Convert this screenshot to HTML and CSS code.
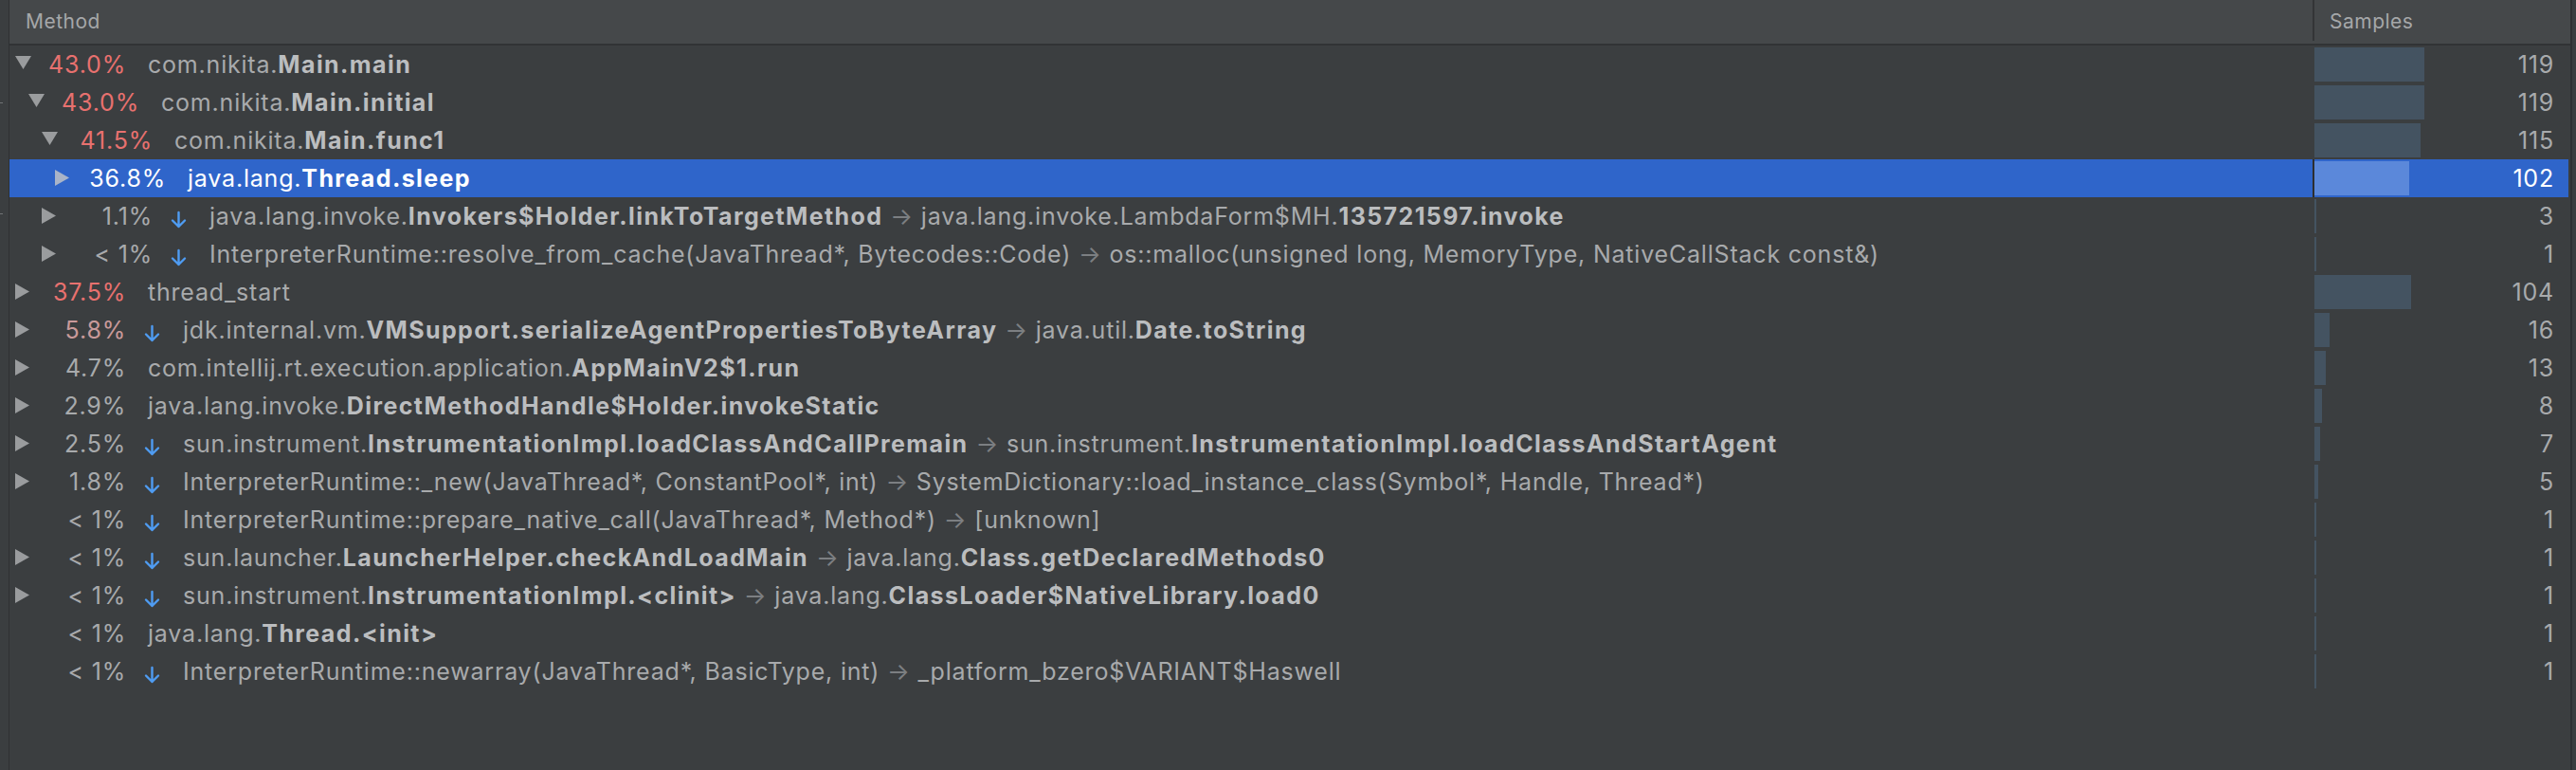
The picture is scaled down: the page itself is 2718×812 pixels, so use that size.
FILE: index.html
```html
<!DOCTYPE html>
<html>
<head>
<meta charset="utf-8">
<link rel="stylesheet" href="styles.css">
</head>
<body>
<div class="panel">
  <div class="gutter"><div class="tick tick1"></div><div class="tick tick2"></div></div>
  <div class="table">
    <div class="thead">
      <div class="th th-method">Method</div>
      <div class="th-sep"></div>
      <div class="th th-samples">Samples</div>
    </div>
    <div class="tbody">

      <div class="row">
        <div class="cm lv0"><span class="tog"><svg width="17" height="40"><polygon class="tri" points="0,11 17,11 8.5,25"/></svg></span><span class="pct hot">43.0%</span><span class="txt">com.nikita.<b>Main.main</b></span></div>
        <div class="cs-sep"></div>
        <div class="cs"><span class="bar" style="width:116px"></span><span class="num">119</span></div>
      </div>

      <div class="row">
        <div class="cm lv1"><span class="tog"><svg width="17" height="40"><polygon class="tri" points="0,11 17,11 8.5,25"/></svg></span><span class="pct hot">43.0%</span><span class="txt">com.nikita.<b>Main.initial</b></span></div>
        <div class="cs-sep"></div>
        <div class="cs"><span class="bar" style="width:116px"></span><span class="num">119</span></div>
      </div>

      <div class="row">
        <div class="cm lv2"><span class="tog"><svg width="17" height="40"><polygon class="tri" points="0,11 17,11 8.5,25"/></svg></span><span class="pct hot">41.5%</span><span class="txt">com.nikita.<b>Main.func1</b></span></div>
        <div class="cs-sep"></div>
        <div class="cs"><span class="bar" style="width:112px"></span><span class="num">115</span></div>
      </div>

      <div class="row sel">
        <div class="cm lv3"><span class="tog"><svg width="17" height="40"><polygon class="tri" points="0,11 15,19.5 0,28"/></svg></span><span class="pct">36.8%</span><span class="txt">java.lang.<b>Thread.sleep</b></span></div>
        <div class="cs-sep"></div>
        <div class="cs"><span class="bar" style="width:100px"></span><span class="num">102</span></div>
      </div>

      <div class="row">
        <div class="cm lv2"><span class="tog"><svg width="17" height="40"><polygon class="tri" points="0,11 15,19.5 0,28"/></svg></span><span class="pct">1.1%</span><span class="dn"><svg width="17" height="40"><path d="M8.5 16 V31 M2 24.5 L8.5 31 L15 24.5"/></svg></span><span class="txt">java.lang.invoke.<b>Invokers$Holder.linkToTargetMethod</b> <i class="to">→</i> java.lang.invoke.LambdaForm$MH.<b>135721597.invoke</b></span></div>
        <div class="cs-sep"></div>
        <div class="cs"><span class="bar" style="width:2px"></span><span class="num">3</span></div>
      </div>

      <div class="row">
        <div class="cm lv2"><span class="tog"><svg width="17" height="40"><polygon class="tri" points="0,11 15,19.5 0,28"/></svg></span><span class="pct">&lt; 1%</span><span class="dn"><svg width="17" height="40"><path d="M8.5 16 V31 M2 24.5 L8.5 31 L15 24.5"/></svg></span><span class="txt">InterpreterRuntime::resolve_from_cache(JavaThread*, Bytecodes::Code) <i class="to">→</i> os::malloc(unsigned long, MemoryType, NativeCallStack const&amp;)</span></div>
        <div class="cs-sep"></div>
        <div class="cs"><span class="bar" style="width:2px"></span><span class="num">1</span></div>
      </div>

      <div class="row">
        <div class="cm lv0"><span class="tog"><svg width="17" height="40"><polygon class="tri" points="0,11 15,19.5 0,28"/></svg></span><span class="pct hot">37.5%</span><span class="txt">thread_start</span></div>
        <div class="cs-sep"></div>
        <div class="cs"><span class="bar" style="width:102px"></span><span class="num">104</span></div>
      </div>

      <div class="row">
        <div class="cm lv0"><span class="tog"><svg width="17" height="40"><polygon class="tri" points="0,11 15,19.5 0,28"/></svg></span><span class="pct warm">5.8%</span><span class="dn"><svg width="17" height="40"><path d="M8.5 16 V31 M2 24.5 L8.5 31 L15 24.5"/></svg></span><span class="txt">jdk.internal.vm.<b>VMSupport.serializeAgentPropertiesToByteArray</b> <i class="to">→</i> java.util.<b>Date.toString</b></span></div>
        <div class="cs-sep"></div>
        <div class="cs"><span class="bar" style="width:16px"></span><span class="num">16</span></div>
      </div>

      <div class="row">
        <div class="cm lv0"><span class="tog"><svg width="17" height="40"><polygon class="tri" points="0,11 15,19.5 0,28"/></svg></span><span class="pct">4.7%</span><span class="txt">com.intellij.rt.execution.application.<b>AppMainV2$1.run</b></span></div>
        <div class="cs-sep"></div>
        <div class="cs"><span class="bar" style="width:12px"></span><span class="num">13</span></div>
      </div>

      <div class="row">
        <div class="cm lv0"><span class="tog"><svg width="17" height="40"><polygon class="tri" points="0,11 15,19.5 0,28"/></svg></span><span class="pct">2.9%</span><span class="txt">java.lang.invoke.<b>DirectMethodHandle$Holder.invokeStatic</b></span></div>
        <div class="cs-sep"></div>
        <div class="cs"><span class="bar" style="width:8px"></span><span class="num">8</span></div>
      </div>

      <div class="row">
        <div class="cm lv0"><span class="tog"><svg width="17" height="40"><polygon class="tri" points="0,11 15,19.5 0,28"/></svg></span><span class="pct">2.5%</span><span class="dn"><svg width="17" height="40"><path d="M8.5 16 V31 M2 24.5 L8.5 31 L15 24.5"/></svg></span><span class="txt">sun.instrument.<b>InstrumentationImpl.loadClassAndCallPremain</b> <i class="to">→</i> sun.instrument.<b>InstrumentationImpl.loadClassAndStartAgent</b></span></div>
        <div class="cs-sep"></div>
        <div class="cs"><span class="bar" style="width:6px"></span><span class="num">7</span></div>
      </div>

      <div class="row">
        <div class="cm lv0"><span class="tog"><svg width="17" height="40"><polygon class="tri" points="0,11 15,19.5 0,28"/></svg></span><span class="pct">1.8%</span><span class="dn"><svg width="17" height="40"><path d="M8.5 16 V31 M2 24.5 L8.5 31 L15 24.5"/></svg></span><span class="txt">InterpreterRuntime::_new(JavaThread*, ConstantPool*, int) <i class="to">→</i> SystemDictionary::load_instance_class(Symbol*, Handle, Thread*)</span></div>
        <div class="cs-sep"></div>
        <div class="cs"><span class="bar" style="width:4px"></span><span class="num">5</span></div>
      </div>

      <div class="row">
        <div class="cm lv0"><span class="tog"></span><span class="pct">&lt; 1%</span><span class="dn"><svg width="17" height="40"><path d="M8.5 16 V31 M2 24.5 L8.5 31 L15 24.5"/></svg></span><span class="txt">InterpreterRuntime::prepare_native_call(JavaThread*, Method*) <i class="to">→</i> [unknown]</span></div>
        <div class="cs-sep"></div>
        <div class="cs"><span class="bar" style="width:2px"></span><span class="num">1</span></div>
      </div>

      <div class="row">
        <div class="cm lv0"><span class="tog"><svg width="17" height="40"><polygon class="tri" points="0,11 15,19.5 0,28"/></svg></span><span class="pct">&lt; 1%</span><span class="dn"><svg width="17" height="40"><path d="M8.5 16 V31 M2 24.5 L8.5 31 L15 24.5"/></svg></span><span class="txt">sun.launcher.<b>LauncherHelper.checkAndLoadMain</b> <i class="to">→</i> java.lang.<b>Class.getDeclaredMethods0</b></span></div>
        <div class="cs-sep"></div>
        <div class="cs"><span class="bar" style="width:2px"></span><span class="num">1</span></div>
      </div>

      <div class="row">
        <div class="cm lv0"><span class="tog"><svg width="17" height="40"><polygon class="tri" points="0,11 15,19.5 0,28"/></svg></span><span class="pct">&lt; 1%</span><span class="dn"><svg width="17" height="40"><path d="M8.5 16 V31 M2 24.5 L8.5 31 L15 24.5"/></svg></span><span class="txt">sun.instrument.<b>InstrumentationImpl.&lt;clinit&gt;</b> <i class="to">→</i> java.lang.<b>ClassLoader$NativeLibrary.load0</b></span></div>
        <div class="cs-sep"></div>
        <div class="cs"><span class="bar" style="width:2px"></span><span class="num">1</span></div>
      </div>

      <div class="row">
        <div class="cm lv0"><span class="tog"></span><span class="pct">&lt; 1%</span><span class="txt">java.lang.<b>Thread.&lt;init&gt;</b></span></div>
        <div class="cs-sep"></div>
        <div class="cs"><span class="bar" style="width:2px"></span><span class="num">1</span></div>
      </div>

      <div class="row">
        <div class="cm lv0"><span class="tog"></span><span class="pct">&lt; 1%</span><span class="dn"><svg width="17" height="40"><path d="M8.5 16 V31 M2 24.5 L8.5 31 L15 24.5"/></svg></span><span class="txt">InterpreterRuntime::newarray(JavaThread*, BasicType, int) <i class="to">→</i> _platform_bzero$VARIANT$Haswell</span></div>
        <div class="cs-sep"></div>
        <div class="cs"><span class="bar" style="width:2px"></span><span class="num">1</span></div>
      </div>

    </div>
  </div>
  <div class="edge"></div>
</div>
</body>
</html>
```

FILE: styles.css
```css
html, body {
  margin: 0;
  padding: 0;
  background: #3b3e40;
}

body {
  font-family: Inter, "Noto Sans", sans-serif;
  color: #a8aaac;
}

.panel {
  display: flex;
  height: 812px;
  width: 2718px;
  overflow: hidden;
}

.gutter {
  width: 9px;
  flex: none;
  border-right: 1px solid #2f3133;
  display: flex;
  flex-direction: column;
}

.tick {
  width: 3px;
  height: 1px;
  background: #707375;
}

.tick1 { margin-top: 108px; }
.tick2 { margin-top: 116px; }

.table {
  width: 2702px;
  flex: none;
  display: flex;
  flex-direction: column;
}

.thead {
  display: flex;
  height: 46px;
  background: #45484a;
  border-bottom: 2px solid #313335;
}

.th {
  font-size: 21px;
  line-height: 46px;
  color: #a5a7a9;
  letter-spacing: 0.5px;
}

.th-method {
  width: 2430px;
  padding-left: 17px;
  box-sizing: border-box;
}

.th-sep {
  width: 2px;
  height: 43px;
  background: #333537;
}

.th-samples {
  flex: 1;
  padding-left: 16px;
}

.tbody {
  display: flex;
  flex-direction: column;
}

.row {
  display: flex;
  height: 40px;
  margin-right: 2px;
  font-size: 25px;
  line-height: 40px;
  letter-spacing: 0.8px;
}

.cm {
  width: 2430px;
  box-sizing: border-box;
  flex: none;
  display: flex;
  align-items: flex-start;
  white-space: nowrap;
  overflow: hidden;
}

.lv1 { padding-left: 14px; }
.lv2 { padding-left: 28px; }
.lv3 { padding-left: 42px; }

.tog {
  width: 17px;
  height: 40px;
  margin-left: 6px;
  flex: none;
  display: flex;
}

.tri {
  fill: #9a9c9e;
}

.pct {
  width: 100px;
  flex: none;
  text-align: right;
  color: #a8aaac;
  margin-right: -1px;
}

.pct.hot { color: #e8716f; }
.pct.warm { color: #c99a9a; }

.dn {
  width: 17px;
  height: 40px;
  margin-left: 20px;
  flex: none;
  display: flex;
}

.dn path {
  fill: none;
  stroke: #4f9cf2;
  stroke-width: 2.4;
  stroke-linecap: round;
  stroke-linejoin: round;
}

.txt {
  margin-left: 24px;
  color: #a8aaac;
}

.txt b {
  font-weight: 700;
  color: #bbbdbf;
  letter-spacing: 1.4px;
}

.to {
  font-style: normal;
  color: #7c7f82;
}

.cs-sep {
  width: 2px;
  flex: none;
}

.cs {
  flex: 1;
  display: flex;
  align-items: center;
  justify-content: space-between;
  padding-right: 15px;
}

.bar {
  height: 36px;
  background: #445361;
}

.num {
  color: #a8aaac;
}

.row.sel .cm,
.row.sel .cs {
  background: #2f65ca;
}

.row.sel .cs-sep {
  background: #2c2e30;
}

.row.sel .pct,
.row.sel .txt,
.row.sel .txt b,
.row.sel .num {
  color: #ffffff;
}

.row.sel .tri {
  fill: #a9b4c8;
}

.row.sel .bar {
  background: #5b88da;
}

.edge {
  width: 4px;
  flex: none;
  border-left: 2px solid #2f3133;
}
```
